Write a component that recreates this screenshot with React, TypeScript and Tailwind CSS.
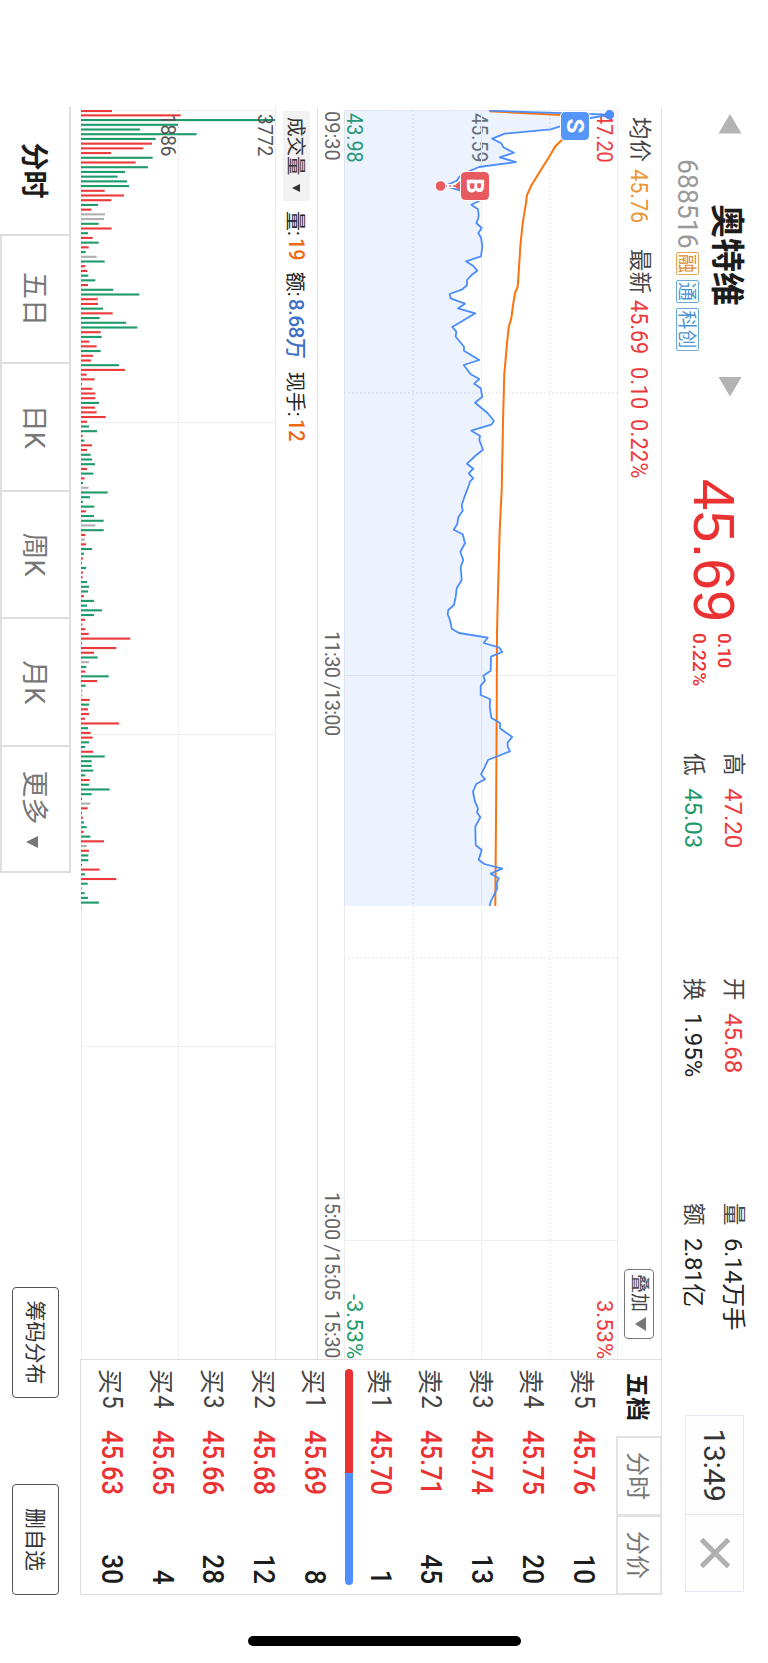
import type { ReactNode } from "react";
import clsx from "clsx";

type Sample = [number, number];

// [time offset, height] samples of the intraday price line, three units per pixel
const PRICE: Sample[] = [
  [62, 316], [74, 677], [84, 620], [104, 545], [118, 500], [131, 362], [146, 325], [160, 352],
  [172, 358], [188, 390], [202, 347], [216, 396], [231, 285], [246, 250], [262, 225], [272, 218],
  [288, 182], [302, 230], [318, 285], [330, 292], [344, 262], [358, 282], [374, 284], [385, 283],
  [399, 277], [414, 293], [429, 283], [443, 291], [470, 295], [499, 291], [514, 246], [528, 268],
  [542, 280], [556, 262], [570, 249], [586, 249], [598, 235], [612, 197], [625, 200], [641, 243],
  [655, 222], [670, 274], [711, 205], [725, 217], [740, 215], [770, 240], [782, 240], [810, 286],
  [825, 239], [853, 260], [867, 286], [881, 271], [895, 290], [920, 295], [938, 273], [968, 310],
  [993, 330], [1004, 322], [1022, 262], [1037, 288], [1050, 286], [1079, 297], [1095, 277], [1121, 249],
  [1136, 268], [1150, 254], [1165, 268], [1174, 258], [1185, 255], [1216, 243], [1245, 233], [1262, 236],
  [1282, 223], [1302, 220], [1319, 209], [1333, 236], [1360, 243], [1385, 229], [1410, 238], [1432, 230],
  [1470, 233], [1495, 218], [1520, 215], [1545, 210], [1560, 193], [1573, 191], [1590, 198], [1616, 203],
  [1629, 225], [1643, 311], [1659, 299], [1672, 345], [1686, 355], [1700, 321], [1742, 320], [1757, 298],
  [1772, 303], [1787, 290], [1815, 290], [1828, 319], [1850, 317], [1883, 322], [1900, 349], [1915, 348],
  [1941, 385], [1957, 371], [1970, 371], [1984, 378], [2010, 312], [2030, 303], [2053, 291], [2068, 303],
  [2082, 277], [2105, 267], [2135, 273], [2155, 282], [2167, 279], [2182, 289], [2210, 274], [2265, 275],
  [2280, 293], [2309, 284], [2322, 301], [2336, 355], [2351, 320], [2365, 344], [2380, 338], [2395, 340],
  [2435, 320], [2448, 317],
];

const AVERAGE: Sample[] = [
  [64, 316], [75, 530], [100, 590], [125, 560], [150, 533], [170, 513], [190, 502], [288, 441],
  [315, 429], [345, 425], [380, 419], [410, 415], [470, 409], [520, 406], [590, 401], [610, 393],
  [640, 388], [685, 382], [712, 374], [760, 369], [830, 363], [850, 361], [1000, 357], [1200, 353],
  [1320, 347], [1430, 344], [1500, 342], [1630, 339], [1870, 338], [2070, 337], [2448, 334],
];

// one bar per minute: r = up, g = down, k = flat
const VOLUME =
  "r93 r299 g584 g291 g177 g347 g224 r213 r187 r90 g215 r164 g201 g132 g110 g138 g144 r71 r129 r91 " +
  "g51 r31 k72 k69 g53 r92 g21 r35 g53 r23 g14 k47 g71 r13 r19 g22 g43 r21 g97 g175 " +
  "r50 r51 g66 r95 g56 g135 g169 r59 g62 r25 r47 g59 r36 r30 g114 r132 r17 r41 g3 r34 " +
  "r43 r43 g54 r42 r47 r74 r18 g24 g48 r5 g10 r33 r18 g29 g33 g42 r18 g37 r11 g6 " +
  "k23 g80 g27 g6 g40 r15 g39 g68 k43 g68 r13 k12 r15 g33 g9 r6 g3 g15 r6 r5 " +
  "g18 g24 g21 r9 g39 g18 g63 g39 r12 r4 r13 r23 r148 g3 r106 r39 g50 k24 g16 r13 " +
  "g83 r48 g14 k5 k4 r26 g24 r21 r24 r12 r114 g21 r29 r35 g24 g12 r36 g71 g32 g32 " +
  "g37 g13 r26 g24 g86 g32 r3 k28 r20 g3 r6 g9 g17 r8 g28 r69 k17 r24 g22 g22 " +
  "r3 r56 g12 r106 g20 r2 g11 g21 g54 k2";

const BAR_COLORS: Record<string, string> = { r: "#ec3a3a", g: "#1f9b6a", k: "#b0b0b0" };
const MINUTE = 4.714;

const SELLS = [
  ["卖5", "45.76", "10"],
  ["卖4", "45.75", "20"],
  ["卖3", "45.74", "13"],
  ["卖2", "45.71", "45"],
  ["卖1", "45.70", "1"],
];

const BUYS = [
  ["买1", "45.69", "8"],
  ["买2", "45.68", "12"],
  ["买3", "45.66", "28"],
  ["买4", "45.65", "4"],
  ["买5", "45.63", "30"],
];

const toPoints = (samples: Sample[]) =>
  samples.map(([t, v]) => `${((t - 60) / 3).toFixed(1)},${(234 - v / 3).toFixed(1)}`).join(" ");

// Digits are drawn slightly condensed
const Num = ({ children, className }: { children: ReactNode; className?: string }) => (
  <span className={clsx("inline-block origin-left scale-x-90 whitespace-nowrap", className)}>{children}</span>
);

const Down = ({ className }: { className?: string }) => (
  <svg viewBox="0 0 12 10" preserveAspectRatio="none" className={className}>
    <path d="M0 0H12L6 10Z" fill="currentColor" />
  </svg>
);

const Stat = ({ label, value, color }: { label: string; value: string; color: string }) => (
  <div className="flex h-6 items-center">
    <span className="w-[35px] pt-px text-[22.500px] text-[#444]">{label}</span>
    <span className={clsx("pt-px text-[24px] whitespace-nowrap", color)}>{value}</span>
  </div>
);

const Header = () => (
  <header className="flex h-[106px] items-start pl-[114px]">
    <svg viewBox="0 0 20 24" className="mt-[26px] h-6 w-5">
      <path d="M0 12L19.500 0.500V23.500Z" fill="#b3b3b3" />
    </svg>
    <div className="mt-6 ml-[25px] flex w-[192px] flex-col items-center">
      <h1 className="text-[34px] font-bold text-[#1c1c1c]">奥特维</h1>
      <div className="mt-2 flex h-7 w-full items-center">
        <span className="w-[93px] pt-0.5">
          <span className="inline-block origin-left scale-x-95 text-[28px] text-[#999]">688516</span>
        </span>
        <span className="flex h-[23px] w-[23px] items-center justify-center rounded-xs border border-[#e8a45c] pt-0.5 text-[19px] text-[#e08a33]">融</span>
        <span className="ml-[5px] flex h-[23px] w-[23px] items-center justify-center rounded-xs border border-[#6aa9dc] pt-0.5 text-[19px] text-[#4a94d2]">通</span>
        <span className="ml-[5px] flex h-[23px] w-[43px] items-center justify-center rounded-xs border border-[#6aa9dc] pt-0.5 text-[19px] text-[#4a94d2]">科创</span>
      </div>
    </div>
    <svg viewBox="0 0 20 24" className="mt-[26px] ml-[26px] h-6 w-5">
      <path d="M19.500 12L0 0.500V23.500Z" fill="#b3b3b3" />
    </svg>
    <div className="mt-[26px] ml-[82px] w-[154px] font-['Liberation_Sans'] text-[57px] text-[#ea3232]">45.69</div>
    <div className="mt-[34px] flex w-[120px] flex-col gap-[6px] text-[19px] font-medium text-[#ea3232]">
      <span className="tracking-[-0.8px]">0.10</span>
      <span className="tracking-[0.4px]">0.22%</span>
    </div>
    <div className="mt-[22px] flex w-[225px] flex-col gap-4">
      <Stat label="高" value="47.20" color="text-[#ee3a3a]" />
      <Stat label="低" value="45.03" color="text-[#1f9b6a]" />
    </div>
    <div className="mt-[22px] flex w-[225px] flex-col gap-4">
      <Stat label="开" value="45.68" color="text-[#ee3a3a]" />
      <Stat label="换" value="1.95%" color="text-[#222]" />
    </div>
    <div className="mt-[22px] flex w-[212px] flex-col gap-4 tracking-[-0.4px]">
      <Stat label="量" value="6.14万手" color="text-[#222]" />
      <Stat label="额" value="2.81亿" color="text-[#222]" />
    </div>
    <div className="mt-6 flex h-[59px] w-[177px] border border-[#e6e7f4] bg-[#fdfdfd]">
      <div className="flex w-[98px] items-center justify-center text-[30px] tracking-[-0.3px] text-[#333]">13:49</div>
      <div className="flex flex-1 items-center justify-center border-l border-[#e6e7f4]">
        <svg viewBox="0 0 30 30" className="mb-0.5 h-[30px] w-[30px]">
          <path d="M1.500 1.500L28.500 28.500M28.500 1.500L1.500 28.500" stroke="#b0b0b0" strokeWidth="5" />
        </svg>
      </div>
    </div>
  </header>
);

const InfoBar = () => (
  <div className="flex h-[43px] items-center pl-[10px]">
    <span className="w-[52px] text-[22.500px] text-[#444]">均价</span>
    <Num className="w-[80px] text-[24px] text-[#ec9636]">45.76</Num>
    <span className="w-[51px] text-[22.500px] text-[#444]">最新</span>
    <Num className="w-[67px] text-[24px] text-[#ee3a3a]">45.69</Num>
    <Num className="w-[52px] text-[24px] text-[#ee3a3a]">0.10</Num>
    <Num className="w-[80px] text-[24px] tracking-[0.4px] text-[#ee3a3a]">0.22%</Num>
    <button className="ml-auto mr-[20px] flex h-[30px] w-[70px] items-center rounded border border-[#777] pl-1 text-[19px] text-[#444]">
      叠加
      <Down className="mb-0.5 ml-[5px] h-[11px] w-[14px] text-[#777]" />
    </button>
  </div>
);

const PriceChart = () => {
  const line = toPoints(PRICE);
  return (
    <div className="relative ml-[3px] h-[274px] w-[1249px] text-[22px]">
      <Num className="absolute top-[3px] left-[3px] text-[#ee3a3a]">47.20</Num>
      <Num className="absolute top-[128px] left-[3px] text-[#6b6b6b]">45.59</Num>
      <Num className="absolute top-[253px] left-[3px] text-[#1f9b6a]">43.98</Num>
      <span className="absolute top-[3px] right-0 origin-right text-[#ee3a3a]">3.53%</span>
      <span className="absolute top-[253px] right-0 origin-right text-[#1f9b6a]">-3.53%</span>
      <svg viewBox="0 0 1249 274" className="absolute inset-0 h-[274px] w-[1249px]">
        <g stroke="#ededed" strokeWidth="1" fill="none">
          <path d="M0 .5H1249M0 136.500H1249M0 273.500H1249M565.500 0V274M1130.500 0V274M.5 0V274" />
          <path d="M0 68H1249M0 205H1249M283 0V274M848 0V274" stroke="#e4e4e4" strokeDasharray="2 2" />
        </g>
        <polygon points={`0,274 ${line} 796,274`} fill="#4f8efc" fillOpacity=".11" />
        <polyline points={toPoints(AVERAGE)} fill="none" stroke="#fb730c" strokeWidth="2" />
        <polyline points={line} fill="none" stroke="#4a8dfb" strokeWidth="1.800" strokeLinejoin="round" />
        <circle cx="4.700" cy="8.500" r="4.700" fill="#4a8dfb" />
        <path d="M76 157L70 164H82Z" transform="rotate(180 76 160.500)" fill="#e65a60" />
        <path d="M76 163V174" stroke="#fff" strokeWidth="4" />
        <path d="M76 163V174" stroke="#e65a60" strokeWidth="1.500" strokeDasharray="2 2" />
        <circle cx="76" cy="177.500" r="5.300" fill="#e65a60" stroke="#fff" strokeWidth="1" />
      </svg>
      <span className="absolute top-[29px] left-[2px] flex h-7 w-7 items-center justify-center rounded bg-[#5596f8] text-[24px] font-bold text-white outline outline-white">S</span>
      <span className="absolute top-[129px] left-[62px] flex h-7 w-7 items-center justify-center rounded bg-[#e65a60] text-[24px] font-bold text-white outline outline-white">B</span>
    </div>
  );
};

const TimeAxis = () => (
  <div className="flex h-[27px] items-center border-b border-[#e2e2e2] pb-0.5 pl-[4px] text-[20px] whitespace-nowrap text-[#666]">
    <span className="w-[520px]">09:30</span>
    <span className="w-[561px] tracking-[-0.7px]">11:30 /13:00</span>
    <span className="w-[118px] tracking-[-0.4px]">15:00 /15:05</span>
    <span className="tracking-[-0.3px]">15:30</span>
  </div>
);

const VolumeBar = () => (
  <div className="flex h-[42px] items-center border-b border-[#ebebeb] pl-1 text-[20px] text-[#222]">
    <button className="flex h-[27px] w-[90px] items-center bg-[#f2f2f2] pt-[3px] pl-1.5 text-[19.500px] text-[#333]">
      成交量
      <Down className="mb-0.5 ml-2 h-2 w-2" />
    </button>
    <span className="ml-[10px] pt-0.5">量:</span>
    <Num className="ml-[2px] w-[34px] text-[22px] font-medium text-[#ec6a14]">19</Num>
    <span className="pt-0.5">额:</span>
    <span className="ml-0.5 w-[73px] pt-px text-[21px] font-medium tracking-[-0.6px] whitespace-nowrap text-[#3f6fc6]">8.68万</span>
    <span className="pt-0.5">现手:</span>
    <Num className="ml-[2px] text-[22px] font-medium text-[#ec6a14]">12</Num>
  </div>
);

const VolumeChart = () => (
  <div className="relative ml-[3px] h-[194px] w-[1249px]">
    <svg viewBox="0 0 1249 194" className="h-[194px] w-[1249px]">
      <path d="M.5 0V194M624.500 0V194M0 193.500H1249" stroke="#ebebeb" fill="none" />
      <path d="M0 96.500H1249M312.500 0V194M936.500 0V194" stroke="#e4e4e4" strokeDasharray="2 2" fill="none" />
      {VOLUME.split(" ").map((bar, i) => {
        const height = Number(bar.slice(1)) / 3;
        return (
          <rect key={i} x={Math.max(0, i * MINUTE - 0.4)} y={194 - height} width="2.100" height={height} fill={BAR_COLORS[bar[0]]} />
        );
      })}
    </svg>
    <Num className="absolute top-[0px] left-[4px] text-[21px] text-[#555]">3772</Num>
    <Num className="absolute top-[97px] left-[4px] text-[21px] text-[#555]">1886</Num>
  </div>
);

const BookRow = ({ row }: { row: string[] }) => (
  <div className="flex h-[50.75px] items-center pt-px pr-[10px] pl-[9px]">
    <span className="flex w-[61px] items-center text-[#444]">
      <span className="w-[26px] pt-[3px] text-[25px]">{row[0][0]}</span>
      <Num className="text-[27px]">{row[0][1]}</Num>
    </span>
    <span className="origin-left scale-x-[0.88] text-[29px] font-medium text-[#ea3232]">{row[1]}</span>
    <span className="ml-auto origin-right scale-x-90 text-[29px] font-medium text-[#1c1c1c]">{row[2]}</span>
  </div>
);

const OrderBook = () => (
  <div className="h-[581px] w-[236px] border-r border-b border-l border-[#dedede]">
    <div className="flex h-[45px] text-[24px]">
      <div className="flex w-[76px] items-center pt-[3px] pl-[13px] font-bold text-[#1c1c1c]">五档</div>
      <div className="flex w-[79px] items-center justify-center border-2 border-t border-r border-[#e2e2e2] pt-[3px] text-[#777]">分时</div>
      <div className="flex flex-1 items-center justify-center border-2 border-t border-r border-[#e2e2e2] pt-[3px] text-[#777]">分价</div>
    </div>
    <div className="pt-[7px]">
      {SELLS.map((row) => (
        <BookRow key={row[0]} row={row} />
      ))}
    </div>
    <div className="mx-[9px] mt-[2px] flex h-2 overflow-hidden rounded-full">
      <div className="w-[48%] bg-[#ea3232]" />
      <div className="flex-1 bg-[#4f8efc]" />
    </div>
    <div className="pt-[5px]">
      {BUYS.map((row) => (
        <BookRow key={row[0]} row={row} />
      ))}
    </div>
  </div>
);

const Footer = () => (
  <footer className="mt-[9px] flex h-[71px] pl-[107px]">
    <div className="flex w-[127px] items-center justify-center border-t-2 border-[#dedede] pt-[3px] text-[28px] font-bold text-[#1c1c1c]">分时</div>
    {["五日", "日K", "周K", "月K", "更多"].map((tab) => (
      <div key={tab} className="flex w-[127.800px] items-center justify-center border-2 border-r-0 border-[#dedede] pt-1 text-[27px] text-[#777] last-of-type:border-r-2">
        {tab}
        {tab === "更多" && <Down className="mt-0.5 ml-[11px] h-[12px] w-3" />}
      </div>
    ))}
    <button className="mt-[12px] ml-[414px] h-[47px] w-[111px] rounded border border-[#555] pt-0.5 text-[21px] text-[#333]">筹码分布</button>
    <button className="mt-[12px] ml-[86px] h-[47px] w-[111px] rounded border border-[#555] pt-0.5 text-[21px] text-[#333]">删自选</button>
  </footer>
);

export default function App() {
  return (
    <div className="relative h-[1663px] w-[768px] overflow-hidden bg-white">
      {/* landscape screen turned onto a portrait page */}
      <div className="relative h-[768px] w-[1663px] origin-top-left translate-x-[768px] rotate-90 bg-white font-[Roboto,'Noto_Sans_CJK_SC',sans-serif] leading-none">
        <Header />
        <main className="ml-[107px] flex h-[582px] w-[1488px] border-t border-[#e2e2e2]">
          <div className="w-[1252px]">
            <InfoBar />
            <PriceChart />
            <TimeAxis />
            <VolumeBar />
            <VolumeChart />
          </div>
          <OrderBook />
        </main>
        <Footer />
        <div className="absolute top-[247px] left-[1636px] h-[273px] w-[10px] rounded-full bg-black" />
      </div>
    </div>
  );
}
